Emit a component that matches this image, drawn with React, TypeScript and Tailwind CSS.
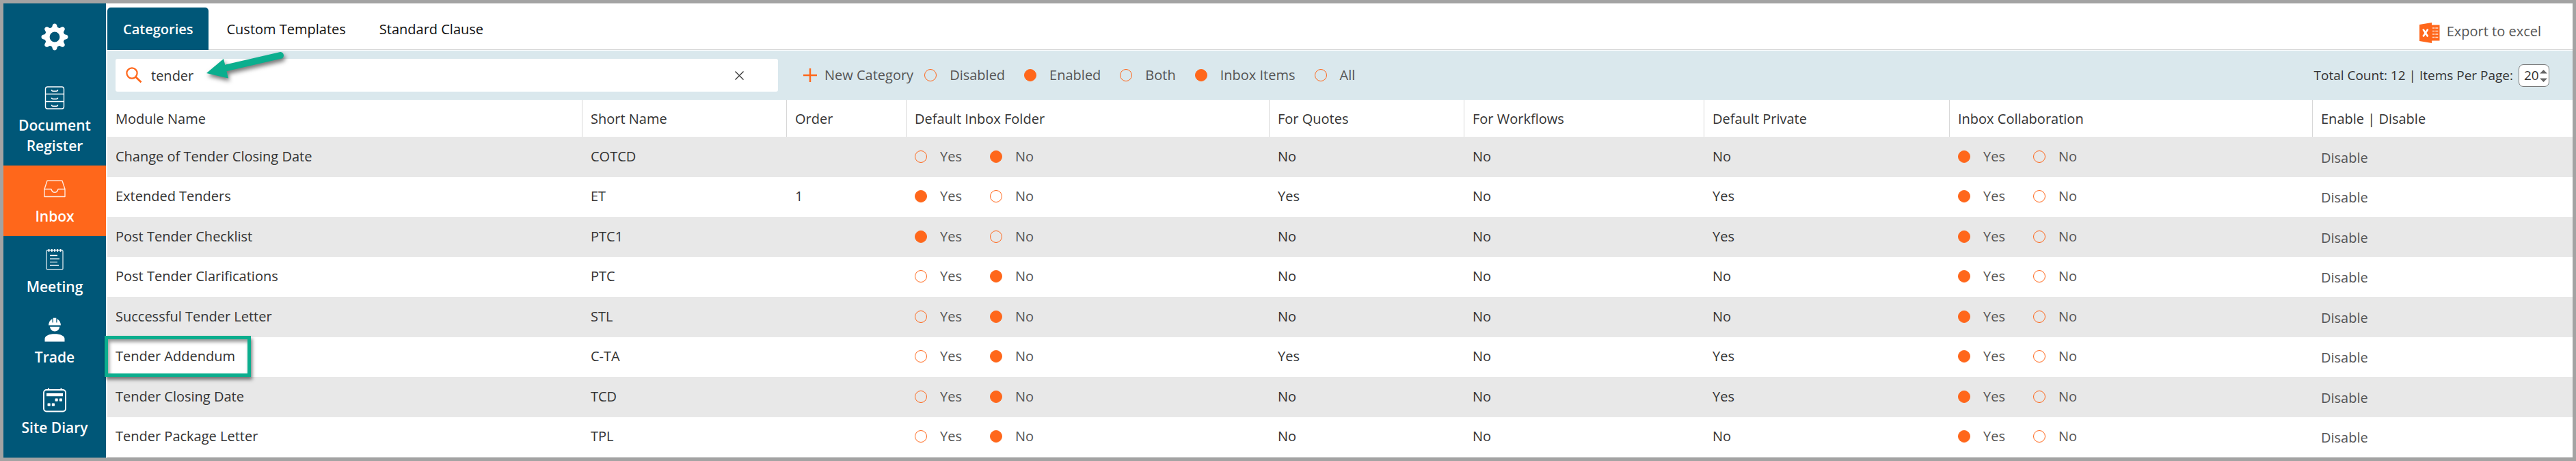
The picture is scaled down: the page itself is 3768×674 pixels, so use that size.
import type { ReactNode } from "react";

type Row = {
  name: string;
  short: string;
  order?: string;
  inboxDefault: boolean;
  quotes: boolean;
  workflows: boolean;
  isPrivate: boolean;
  collaboration: boolean;
  highlighted?: boolean;
};

const rows: Row[] = [
  { name: "Change of Tender Closing Date", short: "COTCD", inboxDefault: false, quotes: false, workflows: false, isPrivate: false, collaboration: true },
  { name: "Extended Tenders", short: "ET", order: "1", inboxDefault: true, quotes: true, workflows: false, isPrivate: true, collaboration: true },
  { name: "Post Tender Checklist", short: "PTC1", inboxDefault: true, quotes: false, workflows: false, isPrivate: true, collaboration: true },
  { name: "Post Tender Clarifications", short: "PTC", inboxDefault: false, quotes: false, workflows: false, isPrivate: false, collaboration: true },
  { name: "Successful Tender Letter", short: "STL", inboxDefault: false, quotes: false, workflows: false, isPrivate: false, collaboration: true },
  { name: "Tender Addendum", short: "C-TA", inboxDefault: false, quotes: true, workflows: false, isPrivate: true, collaboration: true, highlighted: true },
  { name: "Tender Closing Date", short: "TCD", inboxDefault: false, quotes: false, workflows: false, isPrivate: true, collaboration: true },
  { name: "Tender Package Letter", short: "TPL", inboxDefault: false, quotes: false, workflows: false, isPrivate: false, collaboration: true },
];

const columns = [
  { title: "Module Name", width: "w-[694px]" },
  { title: "Short Name", width: "w-[299px]" },
  { title: "Order", width: "w-[175px]" },
  { title: "Default Inbox Folder", width: "w-[531px]" },
  { title: "For Quotes", width: "w-[285px]" },
  { title: "For Workflows", width: "w-[351px]" },
  { title: "Default Private", width: "w-[359px]" },
  { title: "Inbox Collaboration", width: "w-[531px]" },
  { title: "Enable | Disable", width: "w-[381px]" },
];

function GearIcon() {
  const teeth = [0, 45, 90, 135, 180, 225, 270, 315];
  return (
    <svg viewBox="0 0 40 40" className="size-10" fill="white" aria-hidden="true">
      <path
        fillRule="evenodd"
        d="M20 5.5a14.5 14.5 0 1 0 0 29a14.5 14.5 0 1 0 0-29zM20 12.6a7.4 7.4 0 1 1 0 14.8a7.4 7.4 0 1 1 0-14.8z"
      />
      {teeth.map((angle) => (
        <path
          key={angle}
          transform={`rotate(${angle} 20 20)`}
          d="M13.2 8C15.8 7 16.2 5.4 16.8 3C17.3 1.3 18.5 .5 20 .5C21.5 .5 22.7 1.3 23.2 3C23.8 5.4 24.2 7 26.8 8L20 10z"
        />
      ))}
    </svg>
  );
}

function CabinetIcon() {
  return (
    <svg viewBox="0 0 30 34" className="h-[34px] w-[30px]" fill="none" stroke="white" aria-hidden="true">
      <rect x="1.5" y="1" width="27" height="32" rx="3" strokeWidth="1.4" />
      <path d="M1.5 11.5h27M1.5 22.5h27" strokeWidth="1.6" />
      <path
        d="M10.5 5.2c0 1.6 .8 2 2 2h5c1.2 0 2-.4 2-2M10.5 16.7c0 1.6 .8 2 2 2h5c1.2 0 2-.4 2-2M10.5 27.2c0 1.6 .8 2 2 2h5c1.2 0 2-.4 2-2"
        strokeWidth="1.5"
      />
    </svg>
  );
}

function TrayIcon() {
  return (
    <svg viewBox="0 0 32 26" className="h-[26px] w-8" fill="none" stroke="white" strokeOpacity="0.85" strokeWidth="1.4" strokeLinejoin="round" aria-hidden="true">
      <path d="M1 13.5L5 1.2h22L31 13.5v11H1z" />
      <path d="M1 13.5h10c.7 3.2 2.5 4.7 5 4.7s4.3-1.5 5-4.7h10" />
    </svg>
  );
}

function NotepadIcon() {
  return (
    <svg viewBox="0 0 26 32" className="h-8 w-[26px]" fill="none" stroke="white" aria-hidden="true">
      <rect x="1" y="3" width="24" height="28" rx="1.5" strokeWidth="1.4" strokeOpacity="0.8" />
      <path d="M4.5 1v4M8.8 1v4M13 1v4M17.2 1v4M21.5 1v4" strokeWidth="1.8" />
      <path d="M6 10.5h11M6 15.5h14M6 25h13" strokeWidth="1.5" />
      <path d="M6 20.2h11" strokeWidth="1.5" strokeOpacity="0.6" />
    </svg>
  );
}

function WorkerIcon() {
  return (
    <svg viewBox="0 0 30 36" className="h-9 w-[30px]" fill="white" aria-hidden="true">
      <path d="M6 11.5C6.2 7 8.3 3.6 11.5 2.2V7.5h1.2V.8h4.6v6.7h1.2V2.2C21.7 3.6 23.8 7 24 11.5z" />
      <path d="M8 13.8h14.2c-.5 4-3.4 6.7-7.1 6.7S8.5 17.8 8 13.8z" />
      <path d="M0.5 35.5v-4c0-4.5 6.3-7.2 14.5-7.2s14.5 2.7 14.5 7.2v4z" />
    </svg>
  );
}

function CalendarIcon() {
  return (
    <svg viewBox="0 0 34 36" className="h-9 w-[34px]" fill="white" aria-hidden="true">
      <rect x="1" y="3" width="32" height="31.5" rx="4" fill="none" stroke="white" strokeWidth="1.9" />
      <path d="M7 .5h2v3H7zM25.5 .5h2v3h-2zM5 8h24v4.2H5z" />
      <rect x="17.5" y="15.5" width="4.2" height="4.2" rx="1" />
      <rect x="23.8" y="15.5" width="4.2" height="4.2" rx="1" />
      <rect x="6.5" y="22.5" width="4.2" height="4.2" rx="1" />
      <rect x="12.8" y="22.5" width="4.2" height="4.2" rx="1" />
    </svg>
  );
}

function ExcelIcon() {
  return (
    <svg viewBox="0 0 30 30" className="size-[30px]" aria-hidden="true">
      <rect x="17" y="3.5" width="12.5" height="23" fill="#ff671b" />
      <path d="M19 8h3.3M19 12.5h3.3M19 17h3.3M19 21.5h3.3M23.3 8h4M23.3 12.5h4M23.3 17h4M23.3 21.5h4" stroke="#ffe0cf" strokeWidth="1.4" />
      <path d="M0 3L18 0v30L0 27z" fill="#ff671b" />
      <path d="M5.3 9.8L12.3 20.5M12.3 9.8L5.3 20.5" stroke="white" strokeWidth="2.6" />
    </svg>
  );
}

const navigation: { label: string; icon: ReactNode; active?: boolean }[] = [
  { label: "Document Register", icon: <CabinetIcon /> },
  { label: "Inbox", icon: <TrayIcon />, active: true },
  { label: "Meeting", icon: <NotepadIcon /> },
  { label: "Trade", icon: <WorkerIcon /> },
  { label: "Site Diary", icon: <CalendarIcon /> },
];

function Sidebar() {
  return (
    <nav className="w-[150px] shrink-0 bg-[#005778] text-[21px] leading-[30px] font-semibold text-white">
      <button type="button" aria-label="Settings" className="flex h-[104px] w-full items-center justify-center pb-1.5">
        <GearIcon />
      </button>
      {navigation.map(({ label, icon, active }) => (
        <a
          key={label}
          href="#"
          className={`flex flex-col items-center px-5 pt-4 pb-3.5 text-center ${active ? "bg-[#ff671b]" : ""}`}
        >
          <span className="mb-[7px] flex h-9 items-center">{icon}</span>
          {label}
        </a>
      ))}
    </nav>
  );
}

function Radio({ name, label, checked, className = "" }: { name: string; label: string; checked: boolean; className?: string }) {
  return (
    <label className={`flex items-center gap-[19px] text-[#555] ${className}`}>
      <input
        type="radio"
        name={name}
        defaultChecked={checked}
        className="size-[18px] shrink-0 appearance-none rounded-full border border-[#ff671b] checked:bg-[#ff671b]"
      />
      {label}
    </label>
  );
}

function YesNo({ name, value }: { name: string; value: boolean }) {
  return (
    <div className="flex">
      <Radio name={name} label="Yes" checked={value} className="w-[110px]" />
      <Radio name={name} label="No" checked={!value} />
    </div>
  );
}

function Tabs() {
  return (
    <header className="flex items-end justify-between border-b border-[#d8d8d8] pt-1.5 pr-[46px]">
      <div className="-mb-px flex gap-[3px] leading-[60px] font-medium text-[#111]">
        <button type="button" className="rounded-t-[5px] bg-[#005778] px-[23px] pt-0.5 font-semibold text-white">Categories</button>
        <button type="button" className="px-[23px] pt-0.5">Custom Templates</button>
        <button type="button" className="px-[23px] pt-0.5">Standard Clause</button>
      </div>
      <button type="button" className="mb-[5px] flex items-center gap-2.5 text-[#555]">
        <ExcelIcon />
        <span className="pb-1 leading-[34px]">Export to excel</span>
      </button>
    </header>
  );
}

function PointerArrow() {
  return (
    <svg viewBox="0 0 130 56" className="pointer-events-none absolute -top-3 left-[129px] h-14 w-[130px]" aria-hidden="true">
      <g className="drop-shadow-[2px_4px_3px_rgba(0,0,0,0.55)]">
        <path d="M34 25L112 7" stroke="#0bae8e" strokeWidth="10" strokeLinecap="round" />
        <path d="M4 33L29 12L36 40.5z" fill="#0bae8e" />
      </g>
    </svg>
  );
}

function Toolbar() {
  return (
    <div className="mt-px flex items-center justify-between bg-[#dae8ed] py-3 pr-[34px] pl-3">
      <div className="flex items-center">
        <div className="relative flex h-12 w-[969px] items-center rounded-[3px] bg-white pr-[50px] pl-[15px]">
          <svg viewBox="0 0 24 24" className="size-6 shrink-0" fill="none" stroke="#ff671b" aria-hidden="true">
            <circle cx="9" cy="9" r="7.6" strokeWidth="2.2" />
            <path d="M14.5 14.5L22.5 22.2" strokeWidth="2.8" />
          </svg>
          <input
            type="text"
            aria-label="Search"
            defaultValue="tender"
            className="ml-[13px] min-w-0 flex-1 bg-transparent pt-0.5 text-[#333] outline-none"
          />
          <button type="button" aria-label="Clear search">
            <svg viewBox="0 0 13 13" className="size-[13px]" stroke="#333" strokeWidth="1.3" aria-hidden="true">
              <path d="M.5 .5l12 12M12.5 .5l-12 12" />
            </svg>
          </button>
          <PointerArrow />
        </div>
        <button type="button" className="mr-4 ml-[37px] flex items-center gap-[11px] text-[#555]">
          <svg viewBox="0 0 20 20" className="size-5" stroke="#ff671b" strokeWidth="2.4" aria-hidden="true">
            <path d="M10 0v20M0 10h20" />
          </svg>
          New Category
        </button>
        <div className="flex gap-7">
          <Radio name="state-disabled" label="Disabled" checked={false} />
          <Radio name="state-enabled" label="Enabled" checked />
          <Radio name="state-both" label="Both" checked={false} />
          <Radio name="scope" label="Inbox Items" checked />
          <Radio name="scope" label="All" checked={false} />
        </div>
      </div>
      <div className="flex items-center gap-2 text-[19px]">
        <label htmlFor="page-size">Total Count: 12 | Items Per Page:</label>
        <div className="relative">
          <select
            id="page-size"
            defaultValue="20"
            className="block h-[33px] w-[45px] appearance-none rounded-[7px] border border-[#777] bg-white pl-[7px] text-[19px] leading-[30px] text-[#333]"
          >
            <option>20</option>
            <option>50</option>
          </select>
          <svg viewBox="0 0 11 18" className="pointer-events-none absolute top-2 right-[3px] h-[18px] w-[11px]" fill="#666" aria-hidden="true">
            <path d="M0 5.5L5.5 0L11 5.5zM0 12.5h11L5.5 18z" />
          </svg>
        </div>
      </div>
    </div>
  );
}

const answer = (value: boolean) => (value ? "Yes" : "No");

function CategoryTable() {
  return (
    <table className="w-full table-fixed border-separate border-spacing-0 border-b border-[#d8d8d8] text-left leading-7">
      <thead>
        <tr className="h-[54px]">
          {columns.map(({ title, width }) => (
            <th key={title} className={`${width} border-l border-[#d8d8d8] pt-0.5 pl-3 font-normal first:border-l-0`}>
              {title}
            </th>
          ))}
        </tr>
      </thead>
      <tbody>
        {rows.map((row) => (
          <tr
            key={row.short}
            className="h-[58px] odd:h-[59px] odd:bg-[#e8e8e8] [&>td]:border-l [&>td]:border-transparent [&>td]:pt-0 [&>td]:pr-0 [&>td]:pb-0.5 [&>td]:pl-3 [&>td:first-child]:border-l-0"
          >
            <td className="relative">
              {row.name}
              {row.highlighted && (
                <span className="pointer-events-none absolute -top-0.5 -left-1 h-[60px] w-[214px] border-5 border-[#0bae8e] shadow-[2px_4px_5px_rgba(0,0,0,0.5),inset_2px_4px_5px_rgba(0,0,0,0.4)]" />
              )}
            </td>
            <td>{row.short}</td>
            <td>{row.order}</td>
            <td><YesNo name={`${row.short}-inbox`} value={row.inboxDefault} /></td>
            <td>{answer(row.quotes)}</td>
            <td>{answer(row.workflows)}</td>
            <td>{answer(row.isPrivate)}</td>
            <td><YesNo name={`${row.short}-collaboration`} value={row.collaboration} /></td>
            <td><button type="button" className="block pt-1 text-[#555]">Disable</button></td>
          </tr>
        ))}
      </tbody>
    </table>
  );
}

export default function App() {
  return (
    <div className="flex min-h-screen gap-0.5 border-5 border-[#a3a3a3] bg-white font-['Open_Sans','Noto_Sans',sans-serif] text-[20px] text-[#333]">
      <Sidebar />
      <main className="min-w-0 flex-1">
        <Tabs />
        <Toolbar />
        <CategoryTable />
      </main>
    </div>
  );
}
